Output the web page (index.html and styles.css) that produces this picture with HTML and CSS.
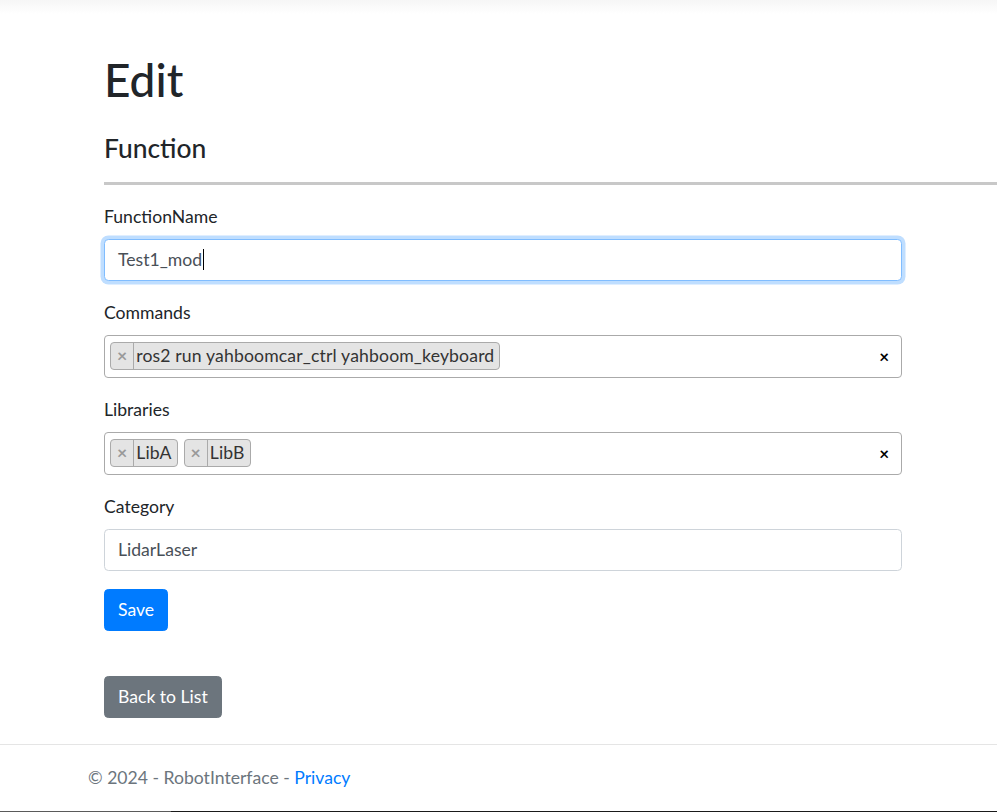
FILE: index.html
```html
<!DOCTYPE html>
<html lang="en">
<head>
<meta charset="utf-8">
<title>Edit - RobotInterface</title>
<link rel="stylesheet" href="styles.css">
</head>
<body>
<div class="topshade"></div>
<main class="main">
  <h1 class="title">Edit</h1>
  <h4 class="subtitle">Function</h4>
  <hr class="rule">
  <form class="form">
    <div class="form-group">
      <label class="label">FunctionName</label>
      <div class="form-control focused">Test1_mod<span class="caret"></span></div>
    </div>
    <div class="form-group">
      <label class="label">Commands</label>
      <div class="select2">
        <div class="chips">
          <span class="chip"><span class="chip-remove">×</span><span class="chip-text">ros2 run yahboomcar_ctrl yahboom_keyboard</span></span>
        </div>
        <span class="clear">×</span>
      </div>
    </div>
    <div class="form-group">
      <label class="label">Libraries</label>
      <div class="select2">
        <div class="chips">
          <span class="chip"><span class="chip-remove">×</span><span class="chip-text">LibA</span></span>
          <span class="chip"><span class="chip-remove">×</span><span class="chip-text">LibB</span></span>
        </div>
        <span class="clear">×</span>
      </div>
    </div>
    <div class="form-group">
      <label class="label">Category</label>
      <div class="form-control">LidarLaser</div>
    </div>
    <div class="form-group">
      <button type="button" class="btn btn-primary">Save</button>
    </div>
  </form>
  <div class="back">
    <a class="btn btn-secondary" href="#">Back to List</a>
  </div>
</main>
<footer class="footer">
  <div class="footer-inner">© 2024 - RobotInterface - <a class="link" href="#">Privacy</a></div>
</footer>
<div class="scrollstrip"><div class="thumb"></div></div>
</body>
</html>
```

FILE: styles.css
```css
html, body {
  margin: 0;
  padding: 0;
}
body {
  font-family: "Lato", "Noto Sans", sans-serif;
  font-size: 17.6px;
  line-height: 1.5;
  color: #212529;
  background: #fff;
  overflow: hidden;
}
.topshade {
  height: 14px;
  background: linear-gradient(to bottom, #f6f6f6, #ffffff);
}
.main {
  padding-left: 104px;
}
.title {
  font-size: 46px;
  font-weight: 500;
  line-height: 1.2;
  margin: 38px 0 26px;
}
.subtitle {
  font-size: 26.4px;
  font-weight: 500;
  line-height: 1.2;
  margin: 0 0 17px;
}
.rule {
  border: 0;
  height: 3px;
  background: #c8c8c8;
  margin: 0 0 18px;
}
.form {
  width: 798px;
}
.form-group {
  margin-bottom: 18px;
}
.label {
  display: block;
  line-height: 27px;
  margin-bottom: 9px;
}
.form-control {
  box-sizing: border-box;
  height: 42px;
  padding: 0 13px;
  display: flex;
  align-items: center;
  border: 1px solid #ced4da;
  border-radius: 4.4px;
  color: #495057;
  background: #fff;
}
.form-control.focused {
  border-color: #80bdff;
  box-shadow: 0 0 0 3.5px rgba(0, 123, 255, 0.25);
}
.caret {
  display: inline-block;
  width: 1px;
  height: 21px;
  background: #000;
  margin-left: 1px;
}
.select2 {
  box-sizing: border-box;
  height: 43px;
  border: 1px solid #aaa;
  border-radius: 4px;
  display: flex;
  align-items: center;
  padding: 0 12px 0 5px;
}
.chips {
  flex: 1;
  display: flex;
  gap: 6px;
}
.chip {
  display: flex;
  height: 28px;
  box-sizing: border-box;
  border: 1px solid #aaa;
  border-radius: 4px;
  background: #e4e4e4;
  color: #333;
  line-height: 26px;
}
.chip-remove {
  color: #999;
  font-weight: bold;
  padding: 0 6px;
  border-right: 1px solid #aaa;
}
.chip-text {
  padding: 0 5px 0 2px;
  letter-spacing: 0.15px;
}
.clear {
  font-weight: bold;
  color: #000;
  font-size: 17px;
}
.btn {
  display: inline-block;
  box-sizing: border-box;
  height: 42px;
  line-height: 40px;
  padding: 0 13px;
  border: 1px solid transparent;
  border-radius: 4.4px;
  font-family: inherit;
  font-size: 17.6px;
  color: #fff;
  text-decoration: none;
}
.btn-primary {
  background: #007bff;
  border-color: #007bff;
}
.btn-secondary {
  background: #6c757d;
  border-color: #6c757d;
}
.back {
  margin-top: 45px;
  height: 43px;
}
.footer {
  margin-top: 25px;
  border-top: 1px solid #e5e5e5;
}
.footer-inner {
  padding-left: 88px;
  line-height: 66px;
  color: #6c757d;
}
.link {
  color: #007bff;
  text-decoration: none;
}
.scrollstrip {
  height: 2px;
  background: #1a1a1a;
}
.thumb {
  width: 171px;
  height: 2px;
  background: #5a5a5a;
}
```
